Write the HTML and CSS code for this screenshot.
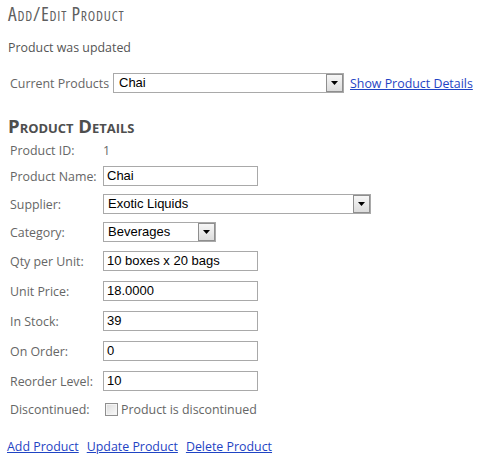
FILE: index.html
```html
<!DOCTYPE html>
<html lang="en">
<head>
<meta charset="utf-8">
<title>Add/Edit Product</title>
<link rel="stylesheet" href="styles.css">
</head>
<body>
<div class="page">
  <h1 class="title">A<span class="sm">dd</span>/E<span class="sm">dit</span> P<span class="sm">roduct</span></h1>
  <p class="status">Product was updated</p>
  <div class="picker">
    <span class="label">Current Products</span>
    <div class="select select-current">
      <span class="select-value">Chai</span>
      <span class="select-btn"><svg width="7" height="4" viewBox="0 0 7 4"><path d="M0 0H7L3.5 4Z" fill="#000"/></svg></span>
    </div>
    <a class="link" href="#">Show Product Details</a>
  </div>

  <h2 class="section">P<span class="sm">roduct</span> D<span class="sm">etails</span></h2>

  <div class="form">
    <div class="row row-id"><span class="label">Product ID:</span><span class="plain">1</span></div>
    <div class="row row-tight"><span class="label">Product Name:</span><span class="input">Chai</span></div>
    <div class="row row-tight"><span class="label">Supplier:</span>
      <div class="select select-supplier">
        <span class="select-value">Exotic Liquids</span>
        <span class="select-btn"><svg width="7" height="4" viewBox="0 0 7 4"><path d="M0 0H7L3.5 4Z" fill="#000"/></svg></span>
      </div>
    </div>
    <div class="row row-tight"><span class="label">Category:</span>
      <div class="select select-category">
        <span class="select-value">Beverages</span>
        <span class="select-btn"><svg width="7" height="4" viewBox="0 0 7 4"><path d="M0 0H7L3.5 4Z" fill="#000"/></svg></span>
      </div>
    </div>
    <div class="row"><span class="label">Qty per Unit:</span><span class="input">10 boxes x 20 bags</span></div>
    <div class="row"><span class="label">Unit Price:</span><span class="input">18.0000</span></div>
    <div class="row"><span class="label">In Stock:</span><span class="input">39</span></div>
    <div class="row"><span class="label">On Order:</span><span class="input">0</span></div>
    <div class="row"><span class="label">Reorder Level:</span><span class="input">10</span></div>
    <div class="row row-check"><span class="label">Discontinued:</span>
      <span class="check"><span class="box"></span><span class="check-text">Product is discontinued</span></span>
    </div>
  </div>

  <div class="actions">
    <a class="link" href="#">Add Product</a>
    <a class="link" href="#">Update Product</a>
    <a class="link" href="#">Delete Product</a>
  </div>
</div>
</body>
</html>
```

FILE: styles.css
```css
* { box-sizing: border-box; }

html, body {
  margin: 0;
  padding: 0;
  background: #ffffff;
}

body {
  font-family: "Open Sans", "DejaVu Sans", sans-serif;
  font-size: 12.4px;
  color: #666666;
}

.page {
  padding: 2px 8px 0 8px;
}

.sm {
  font-size: 0.7em;
  line-height: 1;
  text-transform: uppercase;
}

.title {
  margin: 0;
  font-size: 19.5px;
  line-height: 24px;
  font-weight: normal;
  font-stretch: 80%;
  letter-spacing: 0.8px;
  color: #5f5f5f;
}

.status {
  margin: 14px 0 0 0;
  line-height: 16px;
  color: #555555;
}

.picker {
  display: flex;
  align-items: center;
  height: 20px;
  margin-top: 17px;
  padding-left: 2px;
}

.picker .label {
  width: 103px;
}

.link {
  color: #1f44c4;
  text-decoration: underline;
}

.picker .link {
  margin-left: 6px;
}

.select {
  display: flex;
  align-items: stretch;
  height: 20px;
  border: 1px solid #a9a9a9;
  background: #ffffff;
  font-family: "Liberation Sans", Arial, sans-serif;
  font-size: 13px;
  color: #000;
}

.select-value {
  flex: 1;
  padding-left: 4px;
  line-height: 18px;
  white-space: nowrap;
  overflow: hidden;
}

.select-btn {
  width: 17px;
  border: 1px solid #8e8e8e;
  background: linear-gradient(#f6f6f6, #dcdcdc);
  display: flex;
  align-items: center;
  justify-content: center;
}

.select-current { width: 231px; }
.select-current .select-value { padding-left: 5px; }
.select-supplier { width: 268px; }
.select-category { width: 113px; }

.section {
  margin: 22px 0 0 0;
  font-size: 18.5px;
  line-height: 22px;
  font-weight: bold;
  color: #4e4e4e;
}

.form {
  margin-top: 1px;
  padding-left: 2px;
}

.row {
  display: flex;
  align-items: center;
  height: 30px;
}

.row-id { height: 24px; }
.row-tight { height: 28px; }
.row-check { height: 26px; }

.row .label {
  width: 93px;
  flex: none;
}

.plain {
  color: #666666;
}

.input {
  display: block;
  width: 155px;
  height: 20px;
  border: 1px solid #a9a9a9;
  padding-left: 3px;
  font-family: "Liberation Sans", Arial, sans-serif;
  font-size: 13px;
  line-height: 18px;
  color: #000;
  white-space: nowrap;
}

.check {
  display: flex;
  align-items: center;
  margin-left: 2px;
}

.box {
  width: 13px;
  height: 13px;
  border: 1px solid #8f8f8f;
  background: linear-gradient(135deg, #dcdcdc, #fafafa);
  box-shadow: inset 0 0 0 1px #f4f4f4;
}

.check-text {
  margin-left: 3px;
  color: #666666;
}

.actions {
  display: flex;
  gap: 8px;
  margin-top: 17px;
  margin-left: -1px;
  line-height: 16px;
}
```
